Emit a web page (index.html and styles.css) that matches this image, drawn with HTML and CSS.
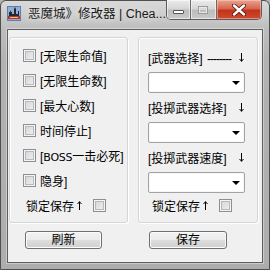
FILE: index.html
```html
<!DOCTYPE html>
<html lang="zh-CN">
<head>
<meta charset="utf-8">
<title>恶魔城》修改器</title>
<link rel="stylesheet" href="styles.css">
</head>
<body>
<div class="window">
  <div class="titlebar">
    <svg class="app-icon" width="14" height="15" viewBox="0 0 14 15">
      <rect x="0" y="0" width="14" height="15" fill="#5b7fae"/>
      <rect x="1" y="1" width="12" height="13" fill="#8fb0d6"/>
      <path d="M2 10 L2 6 L3 6 L3 4 L4 6 L5 6 L5 8 L7 8 L7 3 L8 1 L9 3 L9 8 L11 8 L11 5 L12 5 L12 10 Z" fill="#2a2730"/>
      <rect x="1" y="10" width="12" height="3" fill="#b8352a"/>
      <rect x="3" y="11" width="8" height="1" fill="#e8c070"/>
    </svg>
    <span class="title">恶魔城》修改器 | Chea...</span>
    <div class="caption-buttons">
      <div class="cap cap-min"><span class="min-bar"></span></div>
      <div class="cap cap-max"><span class="max-box"></span></div>
      <div class="cap cap-close">
        <svg width="14" height="12" viewBox="0 0 14 12">
          <path d="M2 1.5 L12 10.5 M12 1.5 L2 10.5" stroke="#5a1a10" stroke-width="4.2" stroke-linecap="round"/>
          <path d="M2 1.5 L12 10.5 M12 1.5 L2 10.5" stroke="#ffffff" stroke-width="2.4" stroke-linecap="round"/>
        </svg>
      </div>
    </div>
  </div>
  <div class="client">
    <div class="group group-left">
      <label class="check-row"><span class="checkbox"></span><span>[无限生命值]</span></label>
      <label class="check-row"><span class="checkbox"></span><span>[无限生命数]</span></label>
      <label class="check-row"><span class="checkbox"></span><span>[最大心数]</span></label>
      <label class="check-row"><span class="checkbox"></span><span>时间停止]</span></label>
      <label class="check-row"><span class="checkbox"></span><span>[<span class="latin">BOSS</span>一击必死]</span></label>
      <label class="check-row"><span class="checkbox"></span><span>隐身]</span></label>
      <label class="lock-row lock-left"><span class="lock-text">锁定保存<svg class="arrow-up" width="5" height="9" viewBox="0 0 5 9"><path d="M2.5 0.5 V9 M0.5 3 L2.5 0.8 L4.5 3" stroke="#000" stroke-width="1" fill="none"/></svg></span><span class="checkbox"></span></label>
    </div>
    <div class="group group-right">
      <div class="field">
        <div class="field-label"><span>[武器选择] <span class="dashes">--------</span></span><svg class="arrow" width="5" height="9" viewBox="0 0 5 9"><path d="M2.5 0 V8.5 M0.5 6 L2.5 8.2 L4.5 6" stroke="#000" stroke-width="1" fill="none"/></svg></div>
        <div class="combo"><span class="combo-arrow"></span></div>
      </div>
      <div class="field">
        <div class="field-label"><span>[投掷武器选择]</span><svg class="arrow" width="5" height="9" viewBox="0 0 5 9"><path d="M2.5 0 V8.5 M0.5 6 L2.5 8.2 L4.5 6" stroke="#000" stroke-width="1" fill="none"/></svg></div>
        <div class="combo"><span class="combo-arrow"></span></div>
      </div>
      <div class="field">
        <div class="field-label"><span>[投掷武器速度]</span><svg class="arrow" width="5" height="9" viewBox="0 0 5 9"><path d="M2.5 0 V8.5 M0.5 6 L2.5 8.2 L4.5 6" stroke="#000" stroke-width="1" fill="none"/></svg></div>
        <div class="combo"><span class="combo-arrow"></span></div>
      </div>
      <label class="lock-row lock-right"><span class="lock-text">锁定保存<svg class="arrow-up" width="5" height="9" viewBox="0 0 5 9"><path d="M2.5 0.5 V9 M0.5 3 L2.5 0.8 L4.5 3" stroke="#000" stroke-width="1" fill="none"/></svg></span><span class="checkbox"></span></label>
    </div>
    <button class="btn btn-left">刷新</button>
    <button class="btn btn-right">保存</button>
  </div>
</div>
</body>
</html>
```
FILE: styles.css
```css
* { box-sizing: border-box; }
html, body { margin: 0; padding: 0; }
body {
  width: 270px;
  height: 270px;
  overflow: hidden;
  font-family: "Liberation Sans", "Noto Sans CJK SC", sans-serif;
  font-size: 12px;
  color: #000;
  background: #b4b4b4;
}
.window {
  width: 270px;
  height: 270px;
  border: 1px solid #4f4f4f;
  border-radius: 6px 6px 0 0;
  background: linear-gradient(#d9d9d9 0px, #cdcdcd 14px, #bdbdbd 28px, #b2b2b2 60px, #adadad 100%);
  padding: 0 6px 6px;
  display: flex;
  flex-direction: column;
}
.titlebar {
  height: 28px;
  display: flex;
  align-items: flex-start;
}
.app-icon {
  margin-top: 5px;
  flex: none;
}
.title {
  margin-left: 7px;
  margin-top: 5px;
  font-size: 12.5px;
  line-height: 17px;
  color: #1a1a1a;
  white-space: nowrap;
  text-shadow: 0 0 6px rgba(255,255,255,0.9);
}
.caption-buttons {
  margin-left: auto;
  margin-right: 1px;
  margin-top: -1px;
  display: flex;
  height: 20px;
  border: 1px solid #5c5c5c;
  border-top: none;
  border-radius: 0 0 5px 5px;
  overflow: hidden;
}
.cap {
  height: 100%;
  display: flex;
  align-items: center;
  justify-content: center;
  background: linear-gradient(#ececec, #d6d6d6 45%, #bdbdbd 55%, #c9c9c9);
  box-shadow: inset 0 0 0 1px rgba(255,255,255,0.55);
}
.cap-min { width: 25px; border-right: 1px solid #6a6a6a; }
.cap-max { width: 27px; border-right: 1px solid #6a6a6a; }
.cap-close {
  width: 46px;
  background: linear-gradient(#e9a493, #d8664d 45%, #c2341b 55%, #d04a2e);
  box-shadow: inset 0 0 0 1px rgba(255,210,200,0.5);
}
.min-bar {
  width: 11px;
  height: 4px;
  margin-top: 5px;
  background: #fff;
  border: 1px solid #555;
  border-radius: 1px;
}
.max-box {
  width: 10px;
  height: 8px;
  border: 1px solid #9a9a9a;
  box-shadow: inset 0 0 0 1px #e8e8e8, inset 0 2px 0 1px #dadada;
}
.client {
  flex: 1;
  background: #f0f0f0;
  border: 1px solid #5e5e5e;
  box-shadow: 0 0 0 1px rgba(255,255,255,0.35);
  display: grid;
  grid-template-columns: 119px 120px;
  grid-template-rows: 186px 18px;
  column-gap: 10px;
  row-gap: 8px;
  padding: 7px 0 0 1px;
  align-content: start;
}
.group {
  border: 1px solid #d5d5d5;
  border-radius: 3px;
  box-shadow: inset 1px 1px 0 #fff, 1px 1px 0 #fff;
  padding-top: 5px;
  display: flex;
  flex-direction: column;
}
.check-row {
  height: 25px;
  display: flex;
  align-items: center;
  gap: 4px;
  padding-left: 13px;
  white-space: nowrap;
}
.latin { font-family: "DejaVu Sans", sans-serif; font-size: 11px; letter-spacing: -0.3px; }
.checkbox {
  width: 13px;
  height: 13px;
  flex: none;
  border: 1px solid #8e8f8f;
  background: linear-gradient(135deg, #cfd2d6, #f3f3f3);
  box-shadow: inset 0 0 0 1px #f4f4f4, inset 0 0 0 2px #b6b9bd;
}
.lock-row {
  height: 25px;
  display: flex;
  align-items: center;
  gap: 11px;
  white-space: nowrap;
}
.lock-text { display: flex; align-items: center; }
.arrow-up { margin-left: 3px; flex: none; }
.lock-left { padding-left: 16px; }
.lock-right { padding-left: 4px; }
.group-right { padding-left: 9px; }
.field { display: flex; flex-direction: column; }
.field-label {
  height: 28px;
  width: 97px;
  display: flex;
  align-items: center;
  justify-content: space-between;
  white-space: nowrap;
}
.dashes { letter-spacing: -1px; margin-left: 1px; }
.arrow { margin-right: 1px; flex: none; }
.combo {
  width: 97px;
  height: 21px;
  margin-top: 1px;
  background: #fff;
  border: 1px solid #a3a3a3;
  border-radius: 2px;
  box-shadow: inset 0 0 0 1px #f7f7f7;
  display: flex;
  align-items: center;
  justify-content: flex-end;
  padding-right: 4px;
}
.combo-arrow {
  width: 0;
  height: 0;
  border-left: 4px solid transparent;
  border-right: 4px solid transparent;
  border-top: 4px solid #000;
}
.btn {
  height: 18px;
  padding: 0;
  font: inherit;
  font-size: 12px;
  line-height: 16px;
  color: #000;
  border: 1px solid #707070;
  border-radius: 3px;
  background: linear-gradient(#f3f3f3, #ebebeb 48%, #dddddd 52%, #cfcfcf);
  box-shadow: inset 0 0 0 1px #fcfcfc;
}
.btn-left { width: 77px; margin-left: 16px; }
.btn-right { width: 78px; margin-left: 11px; }
```
